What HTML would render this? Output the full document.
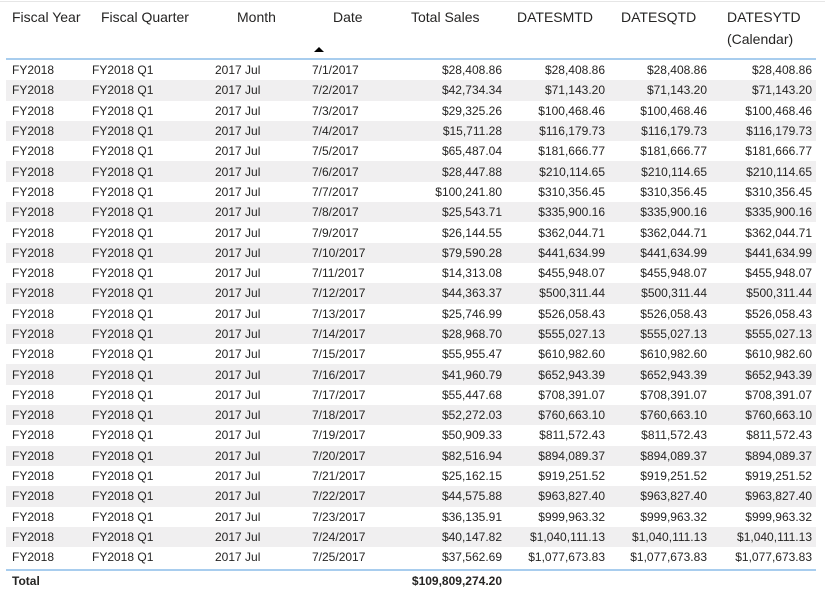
<!DOCTYPE html>
<html><head><meta charset="utf-8"><style>
html,body{margin:0;padding:0;background:#fff;width:825px;height:596px;overflow:hidden;font-family:"Liberation Sans",sans-serif;color:#252423}
.top{position:absolute;left:0;top:1px;width:825px;height:1px;background:#e6e6e6}
.h{position:absolute;top:9px;font-size:14px;color:#252423;white-space:nowrap}
.arrow{position:absolute;left:314px;top:47px;width:0;height:0;border-left:5px solid transparent;border-right:5px solid transparent;border-bottom:5px solid #000}
.line{position:absolute;left:6px;width:810px;height:2px;background:#a8cdee}
table{position:absolute;left:6px;top:60px;border-collapse:collapse;table-layout:fixed;width:810px;font-size:12px}
td{height:20.3px;padding:0;white-space:nowrap;overflow:visible;line-height:20px}
tr:nth-child(even) td{background:#f0eff0}
td.a{padding-left:6px}
td.r{text-align:right;padding-right:4px}
.tot{position:absolute;top:573px;font-size:12px;font-weight:bold;line-height:16px}
</style></head><body>
<div class="top"></div>
<div class="h" style="left:12px">Fiscal Year</div>
<div class="h" style="left:101px">Fiscal Quarter</div>
<div class="h" style="left:237px">Month</div>
<div class="h" style="left:333px">Date</div>
<div class="h" style="left:411px">Total Sales</div>
<div class="h" style="left:517px">DATESMTD</div>
<div class="h" style="left:621px">DATESQTD</div>
<div class="h" style="left:727px">DATESYTD</div>
<div class="h" style="left:727px;top:31px">(Calendar)</div>
<div class="arrow"></div>
<div class="line" style="top:58px"></div>
<table>
<colgroup><col style="width:80px"><col style="width:123px"><col style="width:97px"><col style="width:104px"><col style="width:96px"><col style="width:103px"><col style="width:102px"><col style="width:105px"></colgroup>
<tr><td class="a">FY2018</td><td class="a">FY2018 Q1</td><td class="a">2017 Jul</td><td class="a">7/1/2017</td><td class="r">$28,408.86</td><td class="r">$28,408.86</td><td class="r">$28,408.86</td><td class="r">$28,408.86</td></tr>
<tr><td class="a">FY2018</td><td class="a">FY2018 Q1</td><td class="a">2017 Jul</td><td class="a">7/2/2017</td><td class="r">$42,734.34</td><td class="r">$71,143.20</td><td class="r">$71,143.20</td><td class="r">$71,143.20</td></tr>
<tr><td class="a">FY2018</td><td class="a">FY2018 Q1</td><td class="a">2017 Jul</td><td class="a">7/3/2017</td><td class="r">$29,325.26</td><td class="r">$100,468.46</td><td class="r">$100,468.46</td><td class="r">$100,468.46</td></tr>
<tr><td class="a">FY2018</td><td class="a">FY2018 Q1</td><td class="a">2017 Jul</td><td class="a">7/4/2017</td><td class="r">$15,711.28</td><td class="r">$116,179.73</td><td class="r">$116,179.73</td><td class="r">$116,179.73</td></tr>
<tr><td class="a">FY2018</td><td class="a">FY2018 Q1</td><td class="a">2017 Jul</td><td class="a">7/5/2017</td><td class="r">$65,487.04</td><td class="r">$181,666.77</td><td class="r">$181,666.77</td><td class="r">$181,666.77</td></tr>
<tr><td class="a">FY2018</td><td class="a">FY2018 Q1</td><td class="a">2017 Jul</td><td class="a">7/6/2017</td><td class="r">$28,447.88</td><td class="r">$210,114.65</td><td class="r">$210,114.65</td><td class="r">$210,114.65</td></tr>
<tr><td class="a">FY2018</td><td class="a">FY2018 Q1</td><td class="a">2017 Jul</td><td class="a">7/7/2017</td><td class="r">$100,241.80</td><td class="r">$310,356.45</td><td class="r">$310,356.45</td><td class="r">$310,356.45</td></tr>
<tr><td class="a">FY2018</td><td class="a">FY2018 Q1</td><td class="a">2017 Jul</td><td class="a">7/8/2017</td><td class="r">$25,543.71</td><td class="r">$335,900.16</td><td class="r">$335,900.16</td><td class="r">$335,900.16</td></tr>
<tr><td class="a">FY2018</td><td class="a">FY2018 Q1</td><td class="a">2017 Jul</td><td class="a">7/9/2017</td><td class="r">$26,144.55</td><td class="r">$362,044.71</td><td class="r">$362,044.71</td><td class="r">$362,044.71</td></tr>
<tr><td class="a">FY2018</td><td class="a">FY2018 Q1</td><td class="a">2017 Jul</td><td class="a">7/10/2017</td><td class="r">$79,590.28</td><td class="r">$441,634.99</td><td class="r">$441,634.99</td><td class="r">$441,634.99</td></tr>
<tr><td class="a">FY2018</td><td class="a">FY2018 Q1</td><td class="a">2017 Jul</td><td class="a">7/11/2017</td><td class="r">$14,313.08</td><td class="r">$455,948.07</td><td class="r">$455,948.07</td><td class="r">$455,948.07</td></tr>
<tr><td class="a">FY2018</td><td class="a">FY2018 Q1</td><td class="a">2017 Jul</td><td class="a">7/12/2017</td><td class="r">$44,363.37</td><td class="r">$500,311.44</td><td class="r">$500,311.44</td><td class="r">$500,311.44</td></tr>
<tr><td class="a">FY2018</td><td class="a">FY2018 Q1</td><td class="a">2017 Jul</td><td class="a">7/13/2017</td><td class="r">$25,746.99</td><td class="r">$526,058.43</td><td class="r">$526,058.43</td><td class="r">$526,058.43</td></tr>
<tr><td class="a">FY2018</td><td class="a">FY2018 Q1</td><td class="a">2017 Jul</td><td class="a">7/14/2017</td><td class="r">$28,968.70</td><td class="r">$555,027.13</td><td class="r">$555,027.13</td><td class="r">$555,027.13</td></tr>
<tr><td class="a">FY2018</td><td class="a">FY2018 Q1</td><td class="a">2017 Jul</td><td class="a">7/15/2017</td><td class="r">$55,955.47</td><td class="r">$610,982.60</td><td class="r">$610,982.60</td><td class="r">$610,982.60</td></tr>
<tr><td class="a">FY2018</td><td class="a">FY2018 Q1</td><td class="a">2017 Jul</td><td class="a">7/16/2017</td><td class="r">$41,960.79</td><td class="r">$652,943.39</td><td class="r">$652,943.39</td><td class="r">$652,943.39</td></tr>
<tr><td class="a">FY2018</td><td class="a">FY2018 Q1</td><td class="a">2017 Jul</td><td class="a">7/17/2017</td><td class="r">$55,447.68</td><td class="r">$708,391.07</td><td class="r">$708,391.07</td><td class="r">$708,391.07</td></tr>
<tr><td class="a">FY2018</td><td class="a">FY2018 Q1</td><td class="a">2017 Jul</td><td class="a">7/18/2017</td><td class="r">$52,272.03</td><td class="r">$760,663.10</td><td class="r">$760,663.10</td><td class="r">$760,663.10</td></tr>
<tr><td class="a">FY2018</td><td class="a">FY2018 Q1</td><td class="a">2017 Jul</td><td class="a">7/19/2017</td><td class="r">$50,909.33</td><td class="r">$811,572.43</td><td class="r">$811,572.43</td><td class="r">$811,572.43</td></tr>
<tr><td class="a">FY2018</td><td class="a">FY2018 Q1</td><td class="a">2017 Jul</td><td class="a">7/20/2017</td><td class="r">$82,516.94</td><td class="r">$894,089.37</td><td class="r">$894,089.37</td><td class="r">$894,089.37</td></tr>
<tr><td class="a">FY2018</td><td class="a">FY2018 Q1</td><td class="a">2017 Jul</td><td class="a">7/21/2017</td><td class="r">$25,162.15</td><td class="r">$919,251.52</td><td class="r">$919,251.52</td><td class="r">$919,251.52</td></tr>
<tr><td class="a">FY2018</td><td class="a">FY2018 Q1</td><td class="a">2017 Jul</td><td class="a">7/22/2017</td><td class="r">$44,575.88</td><td class="r">$963,827.40</td><td class="r">$963,827.40</td><td class="r">$963,827.40</td></tr>
<tr><td class="a">FY2018</td><td class="a">FY2018 Q1</td><td class="a">2017 Jul</td><td class="a">7/23/2017</td><td class="r">$36,135.91</td><td class="r">$999,963.32</td><td class="r">$999,963.32</td><td class="r">$999,963.32</td></tr>
<tr><td class="a">FY2018</td><td class="a">FY2018 Q1</td><td class="a">2017 Jul</td><td class="a">7/24/2017</td><td class="r">$40,147.82</td><td class="r">$1,040,111.13</td><td class="r">$1,040,111.13</td><td class="r">$1,040,111.13</td></tr>
<tr><td class="a">FY2018</td><td class="a">FY2018 Q1</td><td class="a">2017 Jul</td><td class="a">7/25/2017</td><td class="r">$37,562.69</td><td class="r">$1,077,673.83</td><td class="r">$1,077,673.83</td><td class="r">$1,077,673.83</td></tr>
</table>
<div class="line" style="top:569px"></div>
<div class="tot" style="left:12px">Total</div>
<div class="tot" style="left:396px;width:106px;text-align:right">$109,809,274.20</div>
</body></html>
